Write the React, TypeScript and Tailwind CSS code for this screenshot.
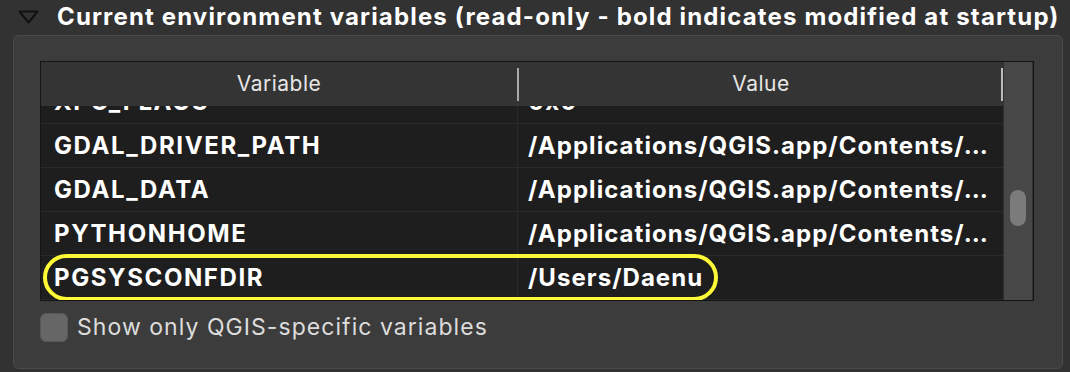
import React from "react";

const rows = [
  { name: "XPC_FLAGS", value: "0x0" },
  { name: "GDAL_DRIVER_PATH", value: "/Applications/QGIS.app/Contents/…" },
  { name: "GDAL_DATA", value: "/Applications/QGIS.app/Contents/…" },
  { name: "PYTHONHOME", value: "/Applications/QGIS.app/Contents/…" },
  { name: "PGSYSCONFDIR", value: "/Users/Daenu" },
];

export default function App() {
  return (
    <div
      className="w-[1070px] h-[372px] bg-[#323232] overflow-hidden relative"
      style={{ fontFamily: "Inter, 'Noto Sans', sans-serif" }}
    >
      {/* Title */}
      <div className="flex items-center h-[35px] pl-[18px]">
        <svg width="21" height="14" viewBox="0 0 21 14" className="mt-[-1px] shrink-0">
          <path d="M1.5 1.5 L19.5 1.5 L10.5 12.5 Z" fill="none" stroke="#111" strokeWidth="2" strokeLinejoin="round" />
        </svg>
        <span className="ml-[18px] text-[24px] font-bold text-white leading-none tracking-[1.15px] mt-[-2px] whitespace-nowrap">
          Current environment variables (read-only - bold indicates modified at startup)
        </span>
      </div>

      {/* Group box */}
      <div className="ml-[13px] w-[1050px] h-[334px] rounded-[6px] border border-[#4b4b4b] bg-[#3c3c3c] pt-[25px] pl-[26px]">
        {/* Table */}
        <div className="w-[994px] h-[240px] border border-[#141414] flex">
          <div className="w-[962px] flex flex-col">
            {/* Header */}
            <div className="h-[44px] bg-[#343434] flex items-center text-[#e6e6e6] text-[21px] tracking-[0.5px] shrink-0">
              <div className="w-[476px] text-center">Variable</div>
              <div className="w-[2px] h-[33px] bg-[#a9a9a9]" />
              <div className="flex-1 text-center pl-[2px]">Value</div>
              <div className="w-[2px] h-[33px] bg-[#bdbdbd]" />
            </div>
            {/* Body */}
            <div className="flex-1 overflow-hidden bg-[#1e1e1e] relative">
              <div className="mt-[-26px]">
                {rows.map((r) => (
                  <div key={r.name} className="h-[44px] flex border-b border-[#2a2a2a] text-white font-bold text-[24px]">
                    <div className="w-[477px] border-r border-[#2a2a2a] flex items-center pl-[13px] leading-none tracking-[1.6px] whitespace-nowrap">
                      {r.name}
                    </div>
                    <div className="flex-1 flex items-center pl-[10px] leading-none whitespace-nowrap overflow-hidden tracking-[1.05px]">
                      {r.value}
                    </div>
                  </div>
                ))}
              </div>
              {/* highlight */}
              <div className="absolute left-[2px] top-[148px] w-[675px] h-[47px] rounded-[24px] border-[4px] border-[#fdf936]" />
            </div>
          </div>
          {/* Scrollbar */}
          <div className="w-[30px] bg-[#474747] border-l border-[#2b2b2b] border-r border-[#303030] flex justify-center">
            <div className="mt-[128px] w-[16px] h-[36px] rounded-full bg-[#7b7b7b]" />
          </div>
        </div>

        {/* Checkbox */}
        <div className="flex items-center mt-[12px]">
          <div className="w-[28px] h-[29px] rounded-[6px] bg-[#666666] border border-[#585858] shrink-0" />
          <span className="ml-[9px] text-[23px] text-[#dcdcdc] leading-none tracking-[1.05px] whitespace-nowrap">
            Show only QGIS-specific variables
          </span>
        </div>
      </div>
    </div>
  );
}
